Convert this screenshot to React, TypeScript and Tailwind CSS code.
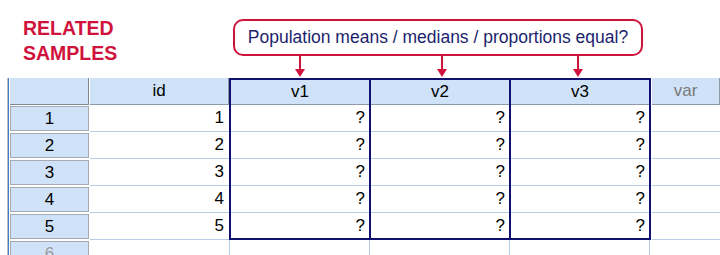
const rows = [1, 2, 3, 4, 5];
const vars = ["v1", "v2", "v3"];

const font = { fontFamily: '"Liberation Sans", Arial, sans-serif' };

function HeaderCell({ label, muted }: { label: string; muted?: boolean }) {
  return (
    <div
      className={`h-[27px] flex items-center justify-center bg-[#cfe2f8] border-b border-r border-[#8e99a8] text-[17px] ${
        muted ? "text-[#7a7a7a]" : "text-black"
      }`}
    >
      {label}
    </div>
  );
}

function DataCell({ value, last }: { value: string; last?: boolean }) {
  return (
    <div
      className={`flex items-center justify-end pr-[4px] text-[17px] text-black ${
        last ? "h-[25px]" : "h-[27px] border-b border-[#b5cde8]"
      }`}
    >
      {value}
    </div>
  );
}

export default function App() {
  return (
    <div className="w-[720px] h-[255px] overflow-hidden bg-white" style={font}>
      {/* top: title + callout */}
      <div className="relative h-[78px] flex">
        <div className="w-[233px] pl-[23px] pt-[16px] text-[19.5px] leading-[25px] font-bold text-[#d0133d]">
          RELATED
          <br />
          SAMPLES
        </div>
        <div className="mt-[19px] h-[37px] w-[410px] rounded-[10px] border-2 border-[#d0133d] flex items-center justify-center text-[17.5px] text-[#1c1f6e]">
          Population means / medians / proportions equal?
        </div>
        <svg className="absolute left-0 top-0" width="720" height="78" viewBox="0 0 720 78">
          {[300, 442, 578].map((x) => (
            <g key={x} fill="#d0133d" stroke="#d0133d">
              <line x1={x} y1={56} x2={x} y2={70} strokeWidth={2} />
              <polygon points={`${x - 5},69 ${x + 5},69 ${x},77`} stroke="none" />
            </g>
          ))}
        </svg>
      </div>

      {/* sheet */}
      <div className="flex ml-[7px] border-l border-[#c0c0c0]">
        <div className="w-px bg-[#3f7fc8]" />
        <div className="w-px" />
        {/* row headers */}
        <div className="w-[80px] flex flex-col">
          <div className="h-[27px] mr-px bg-[#cfe2f8] border-b border-r border-[#7d8694]" />
          {[...rows, 6].map((r) => (
            <div key={r} className="h-[27px] pt-px pr-px">
              <div
                className={`h-[25px] flex items-center justify-center bg-[#cfe2f8] border border-[#a4aab2] text-[17px] ${
                  r === 6 ? "text-[#9a9a9a]" : "text-black"
                }`}
              >
                {r}
              </div>
            </div>
          ))}
        </div>
        {/* id */}
        <div className="w-[139px] flex flex-col">
          <HeaderCell label="id" />
          {rows.map((r) => (
            <div
              key={r}
              className="h-[27px] flex items-center justify-end pr-[5px] border-b border-[#b5cde8] text-[17px]"
            >
              {r}
            </div>
          ))}
          <div className="h-[27px]" />
        </div>
        {/* boxed variables */}
        <div className="w-[422px] flex flex-col">
          <div className="flex border-2 border-[#10106e] divide-x-2 divide-[#10106e]">
            {vars.map((v) => (
              <div key={v} className="flex-1 flex flex-col">
                <div className="h-[25px] flex items-center justify-center bg-[#cfe2f8] border-b border-[#8e99a8] text-[17px]">
                  {v}
                </div>
                {rows.map((r, i) => (
                  <DataCell key={r} value="?" last={i === rows.length - 1} />
                ))}
              </div>
            ))}
          </div>
          <div className="flex h-[27px] border-l border-[#b5cde8]">
            <div className="w-[140px] border-r border-[#b5cde8]" />
            <div className="w-[140px] border-r border-[#b5cde8]" />
            <div className="w-[140px] border-r border-[#b5cde8]" />
          </div>
        </div>
        {/* var */}
        <div className="flex-1 flex flex-col pl-px">
          <HeaderCell label="var" muted />
          {[...rows, 6].map((r) => (
            <div key={r} className="h-[27px] border-b border-[#b5cde8]" />
          ))}
        </div>
      </div>
    </div>
  );
}
